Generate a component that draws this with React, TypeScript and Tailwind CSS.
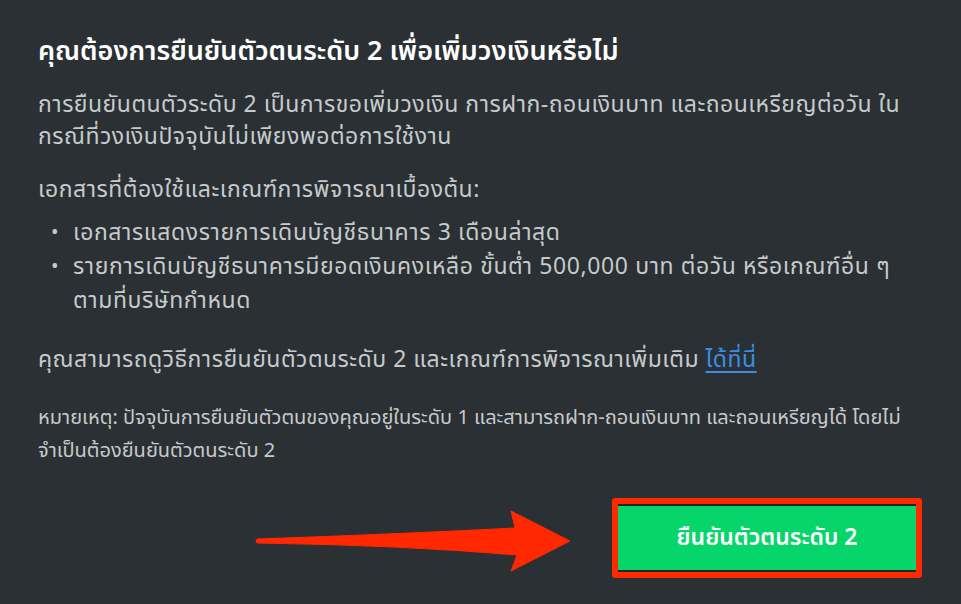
import React from 'react';

const FONT = { fontFamily: '"Noto Sans Thai", "Noto Sans", "Liberation Sans", sans-serif' };

const Arrow: React.FC = () => (
    <svg className="absolute left-0 top-0 pointer-events-none" width="961" height="604" viewBox="0 0 961 604">
        <path
            d="M257,539 Q400,534 515,528 L511,511 L570,541 L511,571 L517,555 Q400,545 257,543 Q255,541 257,539 Z"
            fill="#ff2800"
            stroke="#ff2800"
            strokeWidth="1"
            strokeLinejoin="round"
        />
    </svg>
);

export default function App() {
    return (
        <div className="relative w-[961px] h-[604px] overflow-hidden bg-[#2a3033]" style={FONT}>
            <div className="pl-[38px] pr-[39px] pt-[36px] flex flex-col">
                <h2 className="text-[27px] leading-[32px] font-semibold text-white whitespace-nowrap">
                    คุณต้องการยืนยันตัวตนระดับ 2 เพื่อเพิ่มวงเงินหรือไม่
                </h2>
                <p className="mt-[21px] text-[23px] tracking-[0.5px] leading-[32px] text-[#c6cacc] whitespace-nowrap">
                    การยืนยันตนตัวระดับ 2 เป็นการขอเพิ่มวงเงิน การฝาก-ถอนเงินบาท และถอนเหรียญต่อวัน ใน
                    <br />
                    กรณีที่วงเงินปัจจุบันไม่เพียงพอต่อการใช้งาน
                </p>
                <p className="mt-[21px] text-[23px] tracking-[0.5px] leading-[32px] text-[#c6cacc] whitespace-nowrap">
                    เอกสารที่ต้องใช้และเกณฑ์การพิจารณาเบื้องต้น:
                </p>
                <ul className="mt-[10px] text-[23px] tracking-[0.6px] leading-[34px] text-[#c6cacc]">
                    <li className="flex">
                        <span className="w-[35px] pl-[13px] text-[20px]">•</span>
                        <span className="whitespace-nowrap">เอกสารแสดงรายการเดินบัญชีธนาคาร 3 เดือนล่าสุด</span>
                    </li>
                    <li className="flex">
                        <span className="w-[35px] pl-[13px] text-[20px]">•</span>
                        <span className="whitespace-nowrap">
                            รายการเดินบัญชีธนาคารมียอดเงินคงเหลือ ขั้นต่ำ 500,000 บาท ต่อวัน หรือเกณฑ์อื่น ๆ
                            <br />
                            ตามที่บริษัทกำหนด
                        </span>
                    </li>
                </ul>
                <p className="mt-[26px] text-[23px] tracking-[0.5px] leading-[32px] text-[#c6cacc] whitespace-nowrap">
                    คุณสามารถดูวิธีการยืนยันตัวตนระดับ 2 และเกณฑ์การพิจารณาเพิ่มเติม{' '}
                    <a href="#" className="text-[#3b8ee6] underline underline-offset-4">ได้ที่นี่</a>
                </p>
                <p className="mt-[26px] text-[20px] leading-[33px] text-[#c6cacc] whitespace-nowrap">
                    หมายเหตุ: ปัจจุบันการยืนยันตัวตนของคุณอยู่ในระดับ 1 และสามารถฝาก-ถอนเงินบาท และถอนเหรียญได้ โดยไม่
                    <br />
                    จำเป็นต้องยืนยันตัวตนระดับ 2
                </p>
                <div className="mt-[30px] flex justify-end">
                    <div className="w-[310px] h-[80px] border-[6px] border-[#ff2a00] rounded-[3px] flex">
                        <button className="flex-1 bg-[#06d66a] border-y-2 border-[#1f2628] text-white text-[23px] font-semibold">
                            ยืนยันตัวตนระดับ 2
                        </button>
                    </div>
                </div>
            </div>
            <Arrow />
        </div>
    );
}
